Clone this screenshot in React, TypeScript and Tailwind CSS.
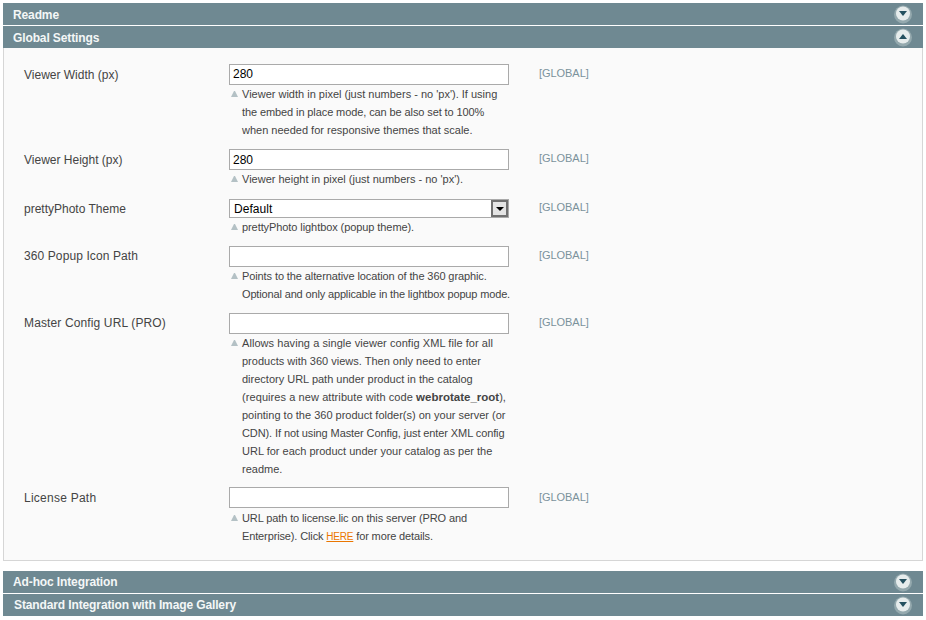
import React from 'react';

const Chevron = ({ up }: { up?: boolean }) => (
  <svg width="20" height="20" viewBox="0 0 20 20" className="block">
    <circle cx="10" cy="10.5" r="9" fill="#94a9ae" />
    <circle cx="10" cy="9.5" r="7" fill="#e6ecec" />
    {up ? <path d="M6 12 L14 12 L10 7 Z" fill="#24505f" /> : <path d="M6 7 L14 7 L10 12 Z" fill="#24505f" />}
  </svg>
);

const Bar = ({ title, up, titleClass = 'leading-[22px]' }: { title: string; up?: boolean; titleClass?: string }) => (
  <div className="flex h-[22px] items-center justify-between bg-[#6f8992] pl-[10px] pr-[10px] text-[12px] font-bold tracking-[-0.12px] text-[#f4f7f7]">
    <span className={titleClass}>{title}</span>
    <Chevron up={up} />
  </div>
);

const Note = ({ children }: { children: React.ReactNode }) => (
  <div className="relative pl-[13px] text-[11px] leading-[18px] whitespace-nowrap text-[#444444]">
    <span className="absolute top-[6px] left-[2px] box-content h-0 w-px border-x-[3px] border-b-[6px] border-x-transparent border-b-[#b4c1c5]" />
    {children}
  </div>
);

const Row = ({ label, value, note, className, select, labelClass = 'pt-[2px]', scopeClass = '', noteClass = '', valueClass = 'leading-[19px]' }: {
  label: string; value?: string; note: React.ReactNode; className: string; select?: boolean; labelClass?: string; scopeClass?: string; noteClass?: string; valueClass?: string;
}) => (
  <div className={`grid grid-cols-[205px_280px_1fr] ${className}`}>
    <div className={`text-[12px] leading-[18px] text-[#444444] ${labelClass}`}>{label}</div>
    <div>
      {select ? (
        <div className="flex h-[19px] items-center justify-between border border-[#aaaaaa] bg-white pl-[4px] text-[12px] tracking-[0.05px] text-black">
          <span>{value}</span>
          <span className="flex h-[17px] w-[17px] items-center justify-center border-2 border-[#707070] bg-[#e4e4e4]">
            <span className="h-0 w-0 border-x-[4px] border-t-[4px] border-x-transparent border-t-black" />
          </span>
        </div>
      ) : (
        <div className={`h-[21px] border border-[#aaaaaa] bg-white pl-[3px] text-[12px] text-black ${valueClass}`}>{value}</div>
      )}
      <div className={noteClass}>
        <Note>{note}</Note>
      </div>
    </div>
    <div className={`pl-[30px] text-[11px] leading-[18px] tracking-[-0.05px] text-[#7b929c] ${scopeClass}`}>[GLOBAL]</div>
  </div>
);

export default function App() {
  return (
    <div className="h-[620px] w-[926px] overflow-hidden bg-white pt-[3px] pr-[3px] pl-[3px] font-['Liberation_Sans',Arial,sans-serif]">
      <Bar title="Readme" titleClass="pt-[2px] leading-[20px]" />
      <div className="h-px" />
      <Bar title="Global Settings" up titleClass="pt-[2px] leading-[20px]" />
      <div className="h-[513px] border-x border-b border-[#d6d6d6] bg-[#fafafa] pt-[16px] pl-[20px]">
        <Row
          label="Viewer Width (px)"
          value="280"
          className="h-[85px]"
          note={<>Viewer width in pixel (just numbers - no 'px'). If using<br /><span className="tracking-[-0.1px]">the embed in place mode, can be also set to 100%</span><br />when needed for responsive themes that scale.</>}
        />
        <Row
          label="Viewer Height (px)"
          value="280"
          valueClass="leading-[21px]"
          className="h-[50px]"
          note="Viewer height in pixel (just numbers - no 'px')."
        />
        <Row
          label="prettyPhoto Theme"
          value="Default"
          select
          labelClass="pt-px"
          scopeClass="-mt-px"
          className="h-[47px]"
          note={<span className="tracking-[-0.08px]">prettyPhoto lightbox (popup theme).</span>}
        />
        <Row
          label="360 Popup Icon Path"
          labelClass="pt-px tracking-[0.1px]"
          className="h-[67px]"
          note={<><span className="tracking-[-0.1px]">Points to the alternative location of the 360 graphic.</span><br /><span className="tracking-[-0.15px]">Optional and only applicable in the lightbox popup mode.</span></>}
        />
        <Row
          label="Master Config URL (PRO)"
          labelClass="pt-px tracking-[0.13px]"
          className="h-[174px]"
          note={<><span className="tracking-[0.06px]">Allows having a single viewer config XML file for all</span><br />products with 360 views. Then only need to enter<br />directory URL path under product in the catalog<br /><span className="tracking-[0.08px]">(requires a new attribute with code </span><strong className="text-[11.5px]">webrotate_root</strong>),<br />pointing to the 360 product folder(s) on your server (or<br /><span className="tracking-[-0.1px]">CDN). If not using Master Config, just enter XML config</span><br />URL for each product under your catalog as per the<br />readme.</>}
        />
        <Row
          label="License Path"
          labelClass="pt-[2px] tracking-[0.25px]"
          scopeClass="mt-px"
          noteClass="mt-px"
          className="h-[60px]"
          note={<><span className="tracking-[-0.11px]">URL path to license.lic on this server (PRO and</span><br /><span className="tracking-[-0.13px]">Enterprise). Click <a className="text-[10px] tracking-[-0.2px] text-[#ea7601] underline">HERE</a> for more details.</span></>}
        />
      </div>
      <div className="h-[10px]" />
      <Bar title="Ad-hoc Integration" />
      <div className="h-px" />
      <Bar title="Standard Integration with Image Gallery" titleClass="pl-px leading-[22px]" />
    </div>
  );
}
